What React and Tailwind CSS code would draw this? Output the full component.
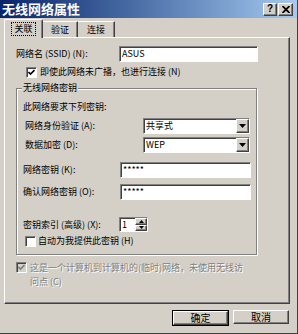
const SUNKEN =
  "border border-t-[#808080] border-l-[#808080] border-b-white border-r-white shadow-[inset_1px_1px_0_#404040]";
const RAISED =
  "border border-t-white border-l-white border-b-[#404040] border-r-[#404040] shadow-[inset_-1px_-1px_0_#808080]";

function CheckBox({ checked, disabled }) {
  return (
    <div
      className={`w-[11px] h-[11px] shrink-0 flex items-center justify-center ${SUNKEN} ${
        disabled ? "bg-[#d4d0c8]" : "bg-white"
      }`}
    >
      {checked && (
        <svg width="7" height="7" viewBox="0 0 7 7">
          <path
            d="M0.5 3 L2.5 5 L6.5 1"
            fill="none"
            stroke={disabled ? "#808080" : "#000"}
            strokeWidth="1.6"
          />
        </svg>
      )}
    </div>
  );
}

function Select({ value }) {
  return (
    <div className={`w-[107px] h-[16px] bg-white flex items-stretch ${SUNKEN}`}>
      <div className="flex-1 pl-[2px] flex items-center leading-[12px]">{value}</div>
      <div className={`w-[13px] bg-[#d4d0c8] flex items-center justify-center ${RAISED}`}>
        <svg width="7" height="4" viewBox="0 0 7 4">
          <path d="M0 0 H7 L3.5 4 Z" fill="#000" />
        </svg>
      </div>
    </div>
  );
}

function Edit({ w, value }) {
  return (
    <div className={`h-[16px] bg-white flex items-center pl-[2px] leading-[12px] ${w} ${SUNKEN}`}>
      {value}
    </div>
  );
}

function Btn({ children, def }) {
  return (
    <div className={def ? "border border-black" : ""}>
      <div
        className={`h-[14px] flex items-center justify-center text-[10px] leading-[12px] ${
          def ? "w-[55px]" : "w-[56px]"
        } ${RAISED}`}
      >
        {children}
      </div>
    </div>
  );
}

export default function App() {
  return (
    <div className="w-[298px] h-[334px] bg-[#d4d0c8] font-['Noto_Sans_CJK_SC',sans-serif] text-[9px] leading-[12px] text-black flex flex-col overflow-hidden border-r border-b border-r-[#404040] border-b-[#404040]">
      {/* Title bar */}
      <div className="h-[18px] shrink-0 flex items-center bg-gradient-to-r from-[#0a246a] to-[#a6caf0] pl-[2px] pr-[4px]">
        <span className="flex-1 text-white font-bold text-[13px] leading-[16px]">无线网络属性</span>
        <div className={`w-[14px] h-[13px] bg-[#d4d0c8] flex items-center justify-center font-bold text-[10px] leading-[10px] font-['Liberation_Sans',sans-serif] ${RAISED}`}>
          ?
        </div>
        <div className={`ml-[1px] w-[15px] h-[13px] bg-[#d4d0c8] flex items-center justify-center ${RAISED}`}>
          <svg width="8" height="7" viewBox="0 0 8 7">
            <path d="M0.5 0 L7.5 7 M7.5 0 L0.5 7" stroke="#000" strokeWidth="1.8" />
          </svg>
        </div>
      </div>

      {/* Tabs */}
      <div className="h-[19px] shrink-0 flex items-end pl-[4px] relative z-10">
        <div className="w-[39px] h-[19px] -mb-[1px] bg-[#d4d0c8] border-l border-t border-r border-l-white border-t-white border-r-[#404040] shadow-[inset_-1px_0_0_#808080] rounded-t-[2px] flex items-center justify-center pb-[1px]">
          <span className="px-[2px] border border-dotted border-black leading-[12px]">关联</span>
        </div>
        <div className="w-[35px] h-[16px] bg-[#d4d0c8] border-t border-r border-t-white border-r-[#404040] shadow-[inset_-1px_0_0_#808080] flex items-center justify-center">
          验证
        </div>
        <div className="w-[37px] h-[16px] bg-[#d4d0c8] border-t border-r border-t-white border-r-[#404040] shadow-[inset_-1px_0_0_#808080] flex items-center justify-center">
          连接
        </div>
      </div>

      {/* Panel */}
      <div className="ml-[4px] w-[286px] h-[267px] shrink-0 border border-l-white border-t-white border-r-[#404040] border-b-[#404040] shadow-[inset_-1px_-1px_0_#808080] flex flex-col">
        {/* SSID */}
        <div className="mt-[8px] h-[16px] flex items-center">
          <div className="ml-[11px] w-[103px]">网络名 (SSID) (N):</div>
          <Edit w="w-[139px]" value="ASUS" />
        </div>

        {/* Broadcast checkbox */}
        <div className="mt-[4px] h-[12px] flex items-center ml-[21px]">
          <CheckBox checked />
          <span className="ml-[3px]">即使此网络未广播，也进行连接 (N)</span>
        </div>

        {/* Group box */}
        <div className="mt-[10px] ml-[11px] w-[241px] h-[167px] border border-[#808080] shadow-[inset_1px_1px_0_#fff,1px_1px_0_#fff] flex flex-col">
          <span className="-mt-[7px] ml-[5px] px-[1px] self-start bg-[#d4d0c8] h-[12px]">无线网络密钥</span>

          <div className="mt-[7px] ml-[6px] h-[12px]">此网络要求下列密钥:</div>

          <div className="mt-[5px] h-[16px] flex items-center">
            <div className="ml-[8px] w-[118px]">网络身份验证 (A):</div>
            <Select value="共享式" />
          </div>

          <div className="mt-[3px] h-[16px] flex items-center">
            <div className="ml-[8px] w-[118px]">数据加密 (D):</div>
            <Select value="WEP" />
          </div>

          <div className="mt-[9px] h-[16px] flex items-center">
            <div className="ml-[6px] w-[97px]">网络密钥 (K):</div>
            <Edit w="w-[131px]" value="*****" />
          </div>

          <div className="mt-[6px] h-[16px] flex items-center">
            <div className="ml-[6px] w-[97px]">确认网络密钥 (O):</div>
            <Edit w="w-[131px]" value="*****" />
          </div>

          <div className="mt-[17px] h-[15px] flex items-center">
            <div className="ml-[6px] w-[96px]">密钥索引 (高级) (X):</div>
            <div className={`w-[29px] h-[15px] bg-white flex items-stretch ${SUNKEN}`}>
              <div className="flex-1 pl-[2px] flex items-center">1</div>
              <div className="w-[12px] flex flex-col">
                <div className={`flex-1 bg-[#d4d0c8] flex items-center justify-center ${RAISED}`}>
                  <svg width="5" height="3" viewBox="0 0 5 3">
                    <path d="M0 3 H5 L2.5 0 Z" fill="#000" />
                  </svg>
                </div>
                <div className={`flex-1 bg-[#d4d0c8] flex items-center justify-center ${RAISED}`}>
                  <svg width="5" height="3" viewBox="0 0 5 3">
                    <path d="M0 0 H5 L2.5 3 Z" fill="#000" />
                  </svg>
                </div>
              </div>
            </div>
          </div>

          <div className="mt-[3px] h-[12px] flex items-center ml-[8px]">
            <CheckBox />
            <span className="ml-[2px]">自动为我提供此密钥 (H)</span>
          </div>
        </div>

        {/* Ad hoc */}
        <div className="mt-[7px] ml-[11px] flex items-start">
          <CheckBox checked disabled />
          <span className="ml-[3px] -mt-[1px] leading-[14px] text-[#808080] [text-shadow:1px_1px_0_#fff]">
            这是一个计算机到计算机的(临时)网络，未使用无线访
            <br />
            问点 (C)
          </span>
        </div>
      </div>

      {/* Buttons */}
      <div className="mt-[6px] flex justify-end gap-[4px] pr-[8px]">
        <Btn def>确定</Btn>
        <Btn>取消</Btn>
      </div>
    </div>
  );
}
